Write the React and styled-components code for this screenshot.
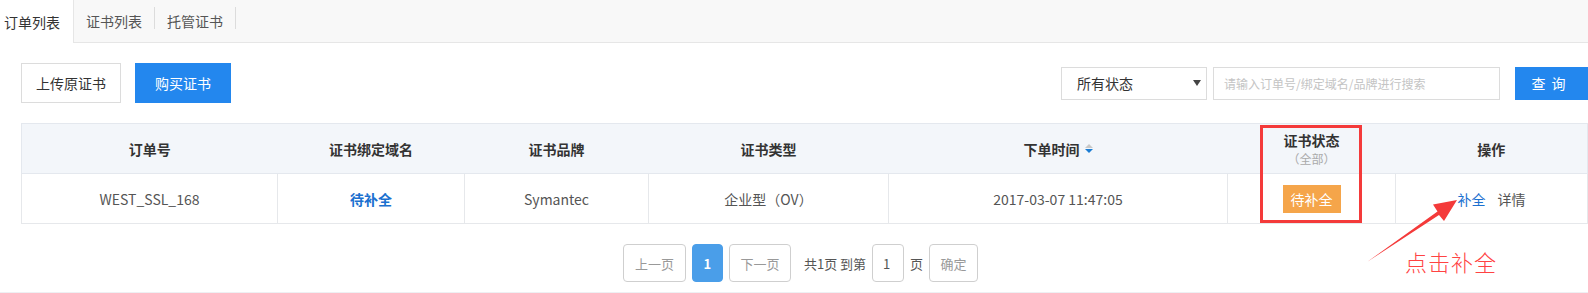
import React from 'react';
import styled, { createGlobalStyle } from 'styled-components';

const GlobalStyle = createGlobalStyle`
  body {
    margin: 0;
    overflow: hidden;
    background: #fff;
    font-family: "Noto Sans CJK SC", "Noto Sans", sans-serif;
    color: #333;
  }
`;

const Page = styled.div`
  position: relative;
  width: 1588px;
  height: 293px;
  overflow: hidden;
`;

const TabBar = styled.div`
  display: flex;
  height: 42px;
  background: #f8f8f8;
  border-bottom: 1px solid #e6e6e6;
`;

const Tab = styled.div`
  position: relative;
  display: flex;
  align-items: center;
  height: ${p => (p.$active ? '43px' : '42px')};
  padding: ${p => (p.$active ? '0 13px 0 4px' : '0 12px')};
  background: ${p => (p.$active ? '#fff' : 'transparent')};
  border-right: 1px solid ${p => (p.$active ? '#e6e6e6' : 'transparent')};
  font-size: 14px;
  color: ${p => (p.$active ? '#333' : '#555')};
  margin-bottom: ${p => (p.$active ? '-1px' : '0')};
  box-sizing: border-box;

  &::after {
    content: '';
    display: ${p => (p.$sep ? 'block' : 'none')};
    position: absolute;
    right: -1px;
    top: 7px;
    width: 1px;
    height: 22px;
    background: #dcdcdc;
  }
`;

const Toolbar = styled.div`
  display: flex;
  align-items: center;
  justify-content: space-between;
  padding: 20px 0 20px 21px;
`;

const Group = styled.div`
  display: flex;
  align-items: center;
`;

const Button = styled.div`
  display: flex;
  align-items: center;
  justify-content: center;
  box-sizing: border-box;
  width: ${p => p.$w}px;
  height: ${p => p.$h || 40}px;
  margin-left: ${p => p.$ml || 0}px;
  background: ${p => (p.$primary ? '#2387ee' : '#fff')};
  border: 1px solid ${p => (p.$primary ? '#2387ee' : '#dcdcdc')};
  color: ${p => (p.$primary ? '#fff' : '#333')};
  font-size: 14px;
  letter-spacing: ${p => p.$ls || 0}px;
`;

const Select = styled.div`
  display: flex;
  align-items: center;
  justify-content: space-between;
  box-sizing: border-box;
  width: 146px;
  height: 33px;
  padding: 0 5px 0 15px;
  border: 1px solid #dcdcdc;
  font-size: 14px;
  color: #333;
`;

const Caret = styled.span`
  width: 0;
  height: 0;
  border-left: 4px solid transparent;
  border-right: 4px solid transparent;
  border-top: 6px solid #444;
`;

const SearchInput = styled.input`
  box-sizing: border-box;
  width: 287px;
  height: 33px;
  margin-left: 6px;
  padding: 0 10px;
  border: 1px solid #dcdcdc;
  outline: none;
  font-family: inherit;
  font-size: 12px;
  &::placeholder {
    color: #c4c4c4;
  }
`;

const Table = styled.table`
  margin-left: 21px;
  width: 1566px;
  border-collapse: collapse;
  table-layout: fixed;
  font-size: 14px;
`;

const Th = styled.th`
  height: 49px;
  padding: 0;
  background: #f3f6fa;
  border-top: 1px solid #e4e8ee;
  border-bottom: 1px solid #e4e8ee;
  border-left: ${p => (p.$first ? '1px solid #e4e8ee' : 'none')};
  border-right: ${p => (p.$last ? '1px solid #e4e8ee' : 'none')};
  font-weight: bold;
  color: #333;
  text-align: center;
  vertical-align: middle;
`;

const Td = styled.td`
  height: 49px;
  padding: 0;
  border: 1px solid #e6e8eb;
  color: #555;
  text-align: center;
  vertical-align: middle;
`;

const SubHead = styled.div`
  font-size: 12px;
  font-weight: normal;
  color: #aaa;
  line-height: 18px;
`;

const HeadLine = styled.div`
  line-height: 20px;
`;

const SortWrap = styled.span`
  display: inline-flex;
  align-items: center;
  gap: 5px;
`;

const SortIcon = styled.span`
  display: inline-flex;
  flex-direction: column;
  gap: 1px;
  &::before,
  &::after {
    content: '';
    width: 0;
    height: 0;
    border-left: 4px solid transparent;
    border-right: 4px solid transparent;
  }
  &::before {
    border-bottom: 4px solid #c8c8c8;
  }
  &::after {
    border-top: 4px solid #1a7cd3;
  }
`;

const Link = styled.span`
  color: #1b70cf;
  font-weight: ${p => (p.$bold ? 'bold' : 'normal')};
  margin-right: ${p => p.$mr || 0}px;
`;

const Badge = styled.span`
  display: inline-block;
  height: 28px;
  line-height: 28px;
  padding: 0 8px;
  background: #f5a54a;
  color: #fff;
  font-size: 14px;
`;

const Pager = styled.div`
  display: flex;
  align-items: center;
  justify-content: center;
  gap: 6px;
  margin-top: 20px;
  padding: 0 8px 10px 21px;
  border-bottom: 1px solid #eef0f3;
`;

const PageBtn = styled.div`
  display: flex;
  align-items: center;
  justify-content: center;
  box-sizing: border-box;
  width: ${p => p.$w}px;
  height: 38px;
  border-radius: 4px;
  border: 1px solid ${p => (p.$active ? '#4a9ee9' : '#cfcfcf')};
  background: ${p => (p.$active ? '#4a9ee9' : '#fff')};
  color: ${p => (p.$active ? '#fff' : '#999')};
  font-weight: ${p => (p.$active ? 'bold' : 'normal')};
  font-size: 13px;
`;

const PageInput = styled(PageBtn)`
  justify-content: flex-start;
  padding-left: 10px;
  color: #555;
`;

const PageText = styled.span`
  font-size: 13px;
  color: #555;
  margin: ${p => p.$m || '0'};
`;

const RedBox = styled.div`
  position: absolute;
  left: 1260px;
  top: 125px;
  width: 102px;
  height: 98px;
  box-sizing: border-box;
  border: 3px solid #f43a3a;
`;

const ArrowSvg = styled.svg`
  position: absolute;
  left: 1360px;
  top: 195px;
`;

const Note = styled.div`
  position: absolute;
  left: 1405px;
  top: 245px;
  font-size: 22px;
  color: #ff4343;
  letter-spacing: 1px;
  font-weight: 300;
`;

const cols = [256, 187, 184, 240, 339, 168, 192];

export default function App() {
  return (
    <Page>
      <GlobalStyle />
      <TabBar>
        <Tab $active>订单列表</Tab>
        <Tab $sep>证书列表</Tab>
        <Tab $sep>托管证书</Tab>
      </TabBar>

      <Toolbar>
        <Group>
          <Button $w={100}>上传原证书</Button>
          <Button $w={96} $ml={14} $primary>购买证书</Button>
        </Group>
        <Group>
          <Select>
            <span>所有状态</span>
            <Caret />
          </Select>
          <SearchInput placeholder="请输入订单号/绑定域名/品牌进行搜索" />
          <Button $w={73} $h={33} $ml={15} $primary $ls={6}>查询</Button>
        </Group>
      </Toolbar>

      <Table>
        <colgroup>
          {cols.map((w, i) => (
            <col key={i} style={{ width: w }} />
          ))}
        </colgroup>
        <thead>
          <tr>
            <Th $first>订单号</Th>
            <Th>证书绑定域名</Th>
            <Th>证书品牌</Th>
            <Th>证书类型</Th>
            <Th>
              <SortWrap>
                下单时间
                <SortIcon />
              </SortWrap>
            </Th>
            <Th>
              <HeadLine>证书状态</HeadLine>
              <SubHead>（全部）</SubHead>
            </Th>
            <Th $last>操作</Th>
          </tr>
        </thead>
        <tbody>
          <tr>
            <Td>WEST_SSL_168</Td>
            <Td>
              <Link $bold>待补全</Link>
            </Td>
            <Td>Symantec</Td>
            <Td>企业型（OV）</Td>
            <Td>2017-03-07 11:47:05</Td>
            <Td>
              <Badge>待补全</Badge>
            </Td>
            <Td>
              <Link $mr={12}>补全</Link>
              详情
            </Td>
          </tr>
        </tbody>
      </Table>

      <Pager>
        <PageBtn $w={63}>上一页</PageBtn>
        <PageBtn $w={31} $active>1</PageBtn>
        <PageBtn $w={62}>下一页</PageBtn>
        <PageText $m="0 0 0 7px">共1页 到第</PageText>
        <PageInput $w={32}>1</PageInput>
        <PageText>页</PageText>
        <PageBtn $w={49}>确定</PageBtn>
      </Pager>

      <RedBox />
      <ArrowSvg width="105" height="75" viewBox="0 0 105 75">
        <polygon
          points="7,67 79,20 84,26 97,5 73,9.5 77.5,16.5"
          fill="#f43a3a"
        />
      </ArrowSvg>
      <Note>点击补全</Note>
    </Page>
  );
}
